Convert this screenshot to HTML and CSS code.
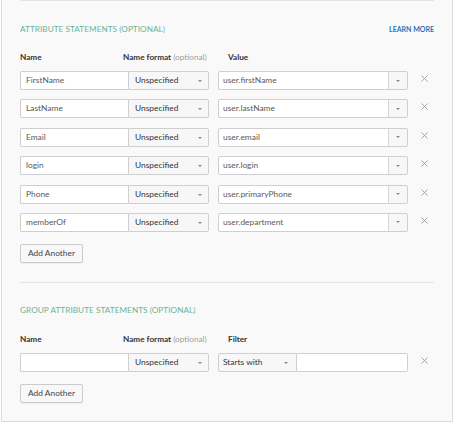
FILE: index.html
```html
<!DOCTYPE html>
<html>
<head>
<meta charset="utf-8">
<link rel="stylesheet" href="styles.css">
</head>
<body>
<div class="panel">
  <section class="section first">
    <div class="title-row">
      <h2 class="title">Attribute Statements (optional)</h2>
      <a class="learn">LEARN MORE</a>
    </div>
    <div class="head-row">
      <span class="h-name">Name</span>
      <span class="h-format">Name format <em>(optional)</em></span>
      <span class="h-value">Value</span>
    </div>
    <div class="rows">
      <div class="row">
        <div class="name-input">FirstName</div>
        <div class="fmt-select">Unspecified<span class="caret"></span></div>
        <div class="value-combo"><span class="val">user.firstName</span><span class="vbtn"><span class="caret"></span></span></div>
        <span class="remove"><svg width="7" height="7" viewBox="0 0 7 7"><path d="M0.5 0.5L6.5 6.5M6.5 0.5L0.5 6.5"/></svg></span>
      </div>
      <div class="row">
        <div class="name-input">LastName</div>
        <div class="fmt-select">Unspecified<span class="caret"></span></div>
        <div class="value-combo"><span class="val">user.lastName</span><span class="vbtn"><span class="caret"></span></span></div>
        <span class="remove"><svg width="7" height="7" viewBox="0 0 7 7"><path d="M0.5 0.5L6.5 6.5M6.5 0.5L0.5 6.5"/></svg></span>
      </div>
      <div class="row">
        <div class="name-input">Email</div>
        <div class="fmt-select">Unspecified<span class="caret"></span></div>
        <div class="value-combo"><span class="val">user.email</span><span class="vbtn"><span class="caret"></span></span></div>
        <span class="remove"><svg width="7" height="7" viewBox="0 0 7 7"><path d="M0.5 0.5L6.5 6.5M6.5 0.5L0.5 6.5"/></svg></span>
      </div>
      <div class="row">
        <div class="name-input">login</div>
        <div class="fmt-select">Unspecified<span class="caret"></span></div>
        <div class="value-combo"><span class="val">user.login</span><span class="vbtn"><span class="caret"></span></span></div>
        <span class="remove"><svg width="7" height="7" viewBox="0 0 7 7"><path d="M0.5 0.5L6.5 6.5M6.5 0.5L0.5 6.5"/></svg></span>
      </div>
      <div class="row">
        <div class="name-input">Phone</div>
        <div class="fmt-select">Unspecified<span class="caret"></span></div>
        <div class="value-combo"><span class="val">user.primaryPhone</span><span class="vbtn"><span class="caret"></span></span></div>
        <span class="remove"><svg width="7" height="7" viewBox="0 0 7 7"><path d="M0.5 0.5L6.5 6.5M6.5 0.5L0.5 6.5"/></svg></span>
      </div>
      <div class="row">
        <div class="name-input">memberOf</div>
        <div class="fmt-select">Unspecified<span class="caret"></span></div>
        <div class="value-combo"><span class="val">user.department</span><span class="vbtn"><span class="caret"></span></span></div>
        <span class="remove"><svg width="7" height="7" viewBox="0 0 7 7"><path d="M0.5 0.5L6.5 6.5M6.5 0.5L0.5 6.5"/></svg></span>
      </div>
    </div>
    <button class="add-btn">Add Another</button>
  </section>

  <section class="section second">
    <div class="title-row">
      <h2 class="title">Group Attribute Statements (optional)</h2>
    </div>
    <div class="head-row">
      <span class="h-name">Name</span>
      <span class="h-format">Name format <em>(optional)</em></span>
      <span class="h-value">Filter</span>
    </div>
    <div class="rows">
      <div class="row">
        <div class="name-input"></div>
        <div class="fmt-select">Unspecified<span class="caret"></span></div>
        <div class="filter-group">
          <div class="filter-select">Starts with<span class="caret"></span></div>
          <div class="filter-input"></div>
        </div>
        <span class="remove"><svg width="7" height="7" viewBox="0 0 7 7"><path d="M0.5 0.5L6.5 6.5M6.5 0.5L0.5 6.5"/></svg></span>
      </div>
    </div>
    <button class="add-btn">Add Another</button>
  </section>
</div>
</body>
</html>
```

FILE: styles.css
```css
html, body {
  margin: 0;
  padding: 0;
  background: #ffffff;
}

body {
  font-family: Lato, "Open Sans", Arial, sans-serif;
  color: #333;
  width: 454px;
  height: 423px;
  overflow: hidden;
}

.panel {
  margin-left: 1px;
  width: 450px;
  height: 421px;
  box-sizing: content-box;
  background: #f9f9f9;
  border: 1px solid #dcdcdc;
  border-top: none;
}

.section {
  margin: 0 18px 0 18px;
  border-top: 1px solid #e3e3e3;
}

.section.first {
  padding-top: 22px;
  padding-bottom: 19px;
}

.section.second {
  padding-top: 21px;
  padding-bottom: 18px;
}

.title-row {
  display: flex;
  justify-content: space-between;
  align-items: center;
  height: 12px;
}

.title {
  margin: 0;
  font-size: 8.2px;
  font-weight: 400;
  text-transform: uppercase;
  color: #6ab495;
  line-height: 12px;
  letter-spacing: 0.05px;
}

.learn {
  font-size: 7px;
  font-weight: 700;
  color: #2a74b5;
  line-height: 12px;
}

.head-row {
  display: flex;
  height: 12px;
  line-height: 12px;
  font-size: 8.2px;
  font-weight: 700;
  color: #333;
  margin-top: 16px;
}

.section.second .head-row {
  margin-top: 17px;
}

.h-name {
  width: 103px;
}

.h-format {
  width: 105px;
}

.h-format em {
  font-style: normal;
  font-weight: 400;
  color: #a0a0a0;
}

.rows {
  display: flex;
  flex-direction: column;
  gap: 9.4px;
  margin-top: 8px;
}

.row {
  display: flex;
  align-items: center;
  height: 19px;
  font-size: 8.4px;
}

.name-input {
  box-sizing: border-box;
  width: 108px;
  height: 19px;
  line-height: 17px;
  padding-left: 5px;
  background: #fff;
  border: 1px solid #cfcfcf;
  border-right: none;
  border-radius: 2px 0 0 2px;
  color: #5a5a5a;
}

.fmt-select {
  box-sizing: border-box;
  position: relative;
  width: 81px;
  height: 19px;
  line-height: 17px;
  padding-left: 6px;
  background: #f7f7f7;
  border: 1px solid #cfcfcf;
  border-radius: 0 2px 2px 0;
  color: #333;
}

.caret {
  position: absolute;
  top: 8px;
  width: 0;
  height: 0;
  border-left: 2px solid transparent;
  border-right: 2px solid transparent;
  border-top: 2.5px solid #888;
}

.fmt-select .caret {
  right: 6px;
}

.value-combo {
  box-sizing: border-box;
  display: flex;
  margin-left: 9px;
  width: 190px;
  height: 19px;
  line-height: 17px;
  background: #fff;
  border: 1px solid #cfcfcf;
  border-radius: 2px;
  color: #5a5a5a;
}

.val {
  flex: 1;
  padding-left: 4px;
}

.vbtn {
  position: relative;
  width: 18px;
  background: #f7f7f7;
  border-left: 1px solid #d6d6d6;
  border-radius: 0 2px 2px 0;
}

.vbtn .caret {
  top: 7.5px;
  left: 7px;
}

.filter-group {
  display: flex;
  margin-left: 9px;
  width: 190px;
  height: 19px;
}

.filter-select {
  box-sizing: border-box;
  position: relative;
  width: 79px;
  height: 19px;
  line-height: 17px;
  padding-left: 4px;
  background: #f7f7f7;
  border: 1px solid #cfcfcf;
  border-radius: 2px 0 0 2px;
  color: #333;
}

.filter-select .caret {
  right: 8px;
}

.filter-input {
  box-sizing: border-box;
  flex: 1;
  height: 19px;
  background: #fff;
  border: 1px solid #cfcfcf;
  border-left: none;
  border-radius: 0 2px 2px 0;
}

.remove {
  display: flex;
  margin-left: 13px;
  margin-top: -4px;
}

.remove svg path {
  stroke: #9a9a9a;
  stroke-width: 0.9;
  fill: none;
}

.add-btn {
  display: block;
  margin-top: 12px;
  box-sizing: border-box;
  width: 63px;
  height: 19px;
  padding: 0;
  font-family: Lato, "Open Sans", Arial, sans-serif;
  font-size: 8.4px;
  color: #444;
  background: #f8f8f8;
  border: 1px solid #cbcbcb;
  border-radius: 2px;
  box-shadow: 0 1px 0 rgba(0,0,0,0.04);
}
```
